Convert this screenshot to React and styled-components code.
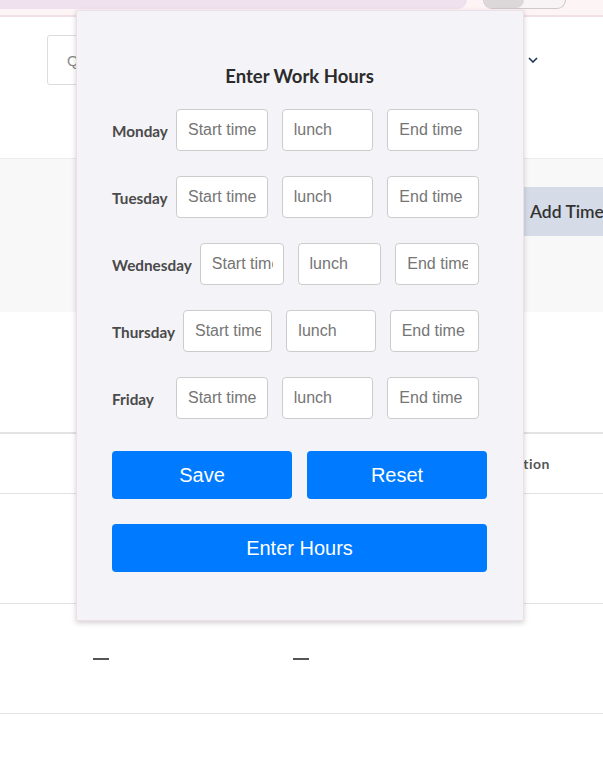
import React from "react";
import styled, { createGlobalStyle } from "styled-components";

const Global = createGlobalStyle`
  html, body { margin: 0; padding: 0; background: #ffffff; }
  body { font-family: Lato, "Liberation Sans", sans-serif; }
  * { box-sizing: border-box; }
`;

const Page = styled.div`
  position: relative;
  width: 603px;
  height: 760px;
  overflow: hidden;
  background: #fff;
`;

const TopBar = styled.div`
  display: flex;
  align-items: flex-start;
  height: 17px;
  background: #fdf4f6;
  border-bottom: 2px solid #f1e0e6;
`;

const TopPill = styled.div`
  width: 467px;
  height: 9px;
  background: #efe2ee;
  border-bottom-right-radius: 12px;
`;

const Toggle = styled.div`
  margin-left: 16px;
  width: 83px;
  height: 9px;
  border: 1px solid #cfc9cc;
  border-top: none;
  border-radius: 0 0 20px 20px;
  background: #f8f4f5;
  display: flex;
`;

const Knob = styled.div`
  width: 40px;
  height: 8px;
  background: #dcd7d8;
  border-radius: 0 0 20px 20px;
`;

const Toolbar = styled.div`
  height: 142px;
  display: flex;
  align-items: flex-start;
  padding: 18px 0 0 47px;
  border-bottom: 1px solid #ebebeb;
  box-shadow: 0 1px 2px rgba(0,0,0,0.05);
`;

const Search = styled.div`
  width: 300px;
  height: 50px;
  border: 1px solid #dcdcdc;
  border-radius: 3px;
  display: flex;
  align-items: center;
  padding-left: 19px;
  font-family: "Liberation Sans", sans-serif;
  font-size: 15px;
  color: #888;
`;

const Chevron = styled.svg`
  margin: 22px 0 0 181px;
`;

const Band = styled.div`
  height: 153px;
  background: #f8f8f9;
  display: flex;
  justify-content: flex-end;
  align-items: flex-start;
  padding-top: 28px;
`;

const AddTime = styled.div`
  width: 79px;
  height: 49px;
  background: #d5dce7;
  display: flex;
  align-items: center;
  padding-left: 6px;
  font-size: 17.5px;
  font-weight: 600;
  color: #333;
  white-space: nowrap;
  overflow: hidden;
`;

const Spacer = styled.div`
  height: 122px;
  border-bottom: 2px solid #e3e3e3;
`;

const Row = styled.div`
  height: ${(p) => p.$h}px;
  border-bottom: 1px solid #e3e3e3;
  display: flex;
  align-items: center;
  font-size: 14px;
  font-weight: 700;
  color: #555;
`;

const HeadCell = styled.div`
  margin-left: 506px;
  letter-spacing: 0.5px;
`;

const Dash = styled.div`
  width: 16px;
  height: 2px;
  background: #555;
  margin-left: ${(p) => p.$ml}px;
`;

const Modal = styled.div`
  position: absolute;
  left: 76px;
  top: 10px;
  width: 448px;
  background: #f4f3f8;
  border: 1px solid #ecdfe6;
  box-shadow: 0 2px 5px rgba(60, 40, 50, 0.22);
  padding: 55px 36px 48px 35px;
  display: flex;
  flex-direction: column;
`;

const Title = styled.h2`
  margin: 0 0 23px;
  text-align: center;
  font-family: Lato, sans-serif;
  font-size: 18.5px;
  line-height: 20px;
  font-weight: 700;
  color: #2b2b2b;
`;

const DayRow = styled.div`
  display: flex;
  align-items: center;
  gap: 14px;
  padding-right: 8px;
  margin-bottom: 25px;
`;

const DayLabel = styled.label`
  min-width: 56px;
  font-family: Lato, sans-serif;
  font-size: 15.3px;
  font-weight: 700;
  color: #4a4a4a;
  padding-top: 2px;
  margin-right: -6px;
  white-space: nowrap;
`;

const TimeInput = styled.input`
  flex: 1;
  min-width: 0;
  height: 42px;
  border: 1px solid #cccccc;
  border-radius: 4px;
  background: #fff;
  padding: 0 10px 0 11px;
  font-family: "Liberation Sans", Arial, sans-serif;
  font-size: 16px;
  color: #333;
  &::placeholder { color: #757575; }
`;

const ButtonRow = styled.div`
  display: flex;
  gap: 15px;
  margin-top: 7px;
  margin-bottom: 25px;
`;

const Button = styled.button`
  flex: ${(p) => (p.$wide ? "none" : "1")};
  height: 48px;
  border: none;
  border-radius: 4px;
  background: #007bff;
  color: #fff;
  font-family: "Liberation Sans", Arial, sans-serif;
  font-size: 20px;
  cursor: pointer;
`;

const days = ["Monday", "Tuesday", "Wednesday", "Thursday", "Friday"];

export default function App() {
  return (
    <Page>
      <Global />
      <TopBar>
        <TopPill />
        <Toggle>
          <Knob />
        </Toggle>
      </TopBar>
      <Toolbar>
        <Search>Quick search</Search>
        <Chevron width="10" height="6" viewBox="0 0 10 6">
          <path d="M1 1 L5 5 L9 1" fill="none" stroke="#1d3557" strokeWidth="1.6" />
        </Chevron>
      </Toolbar>
      <Band>
        <AddTime>Add Time</AddTime>
      </Band>
      <Spacer />
      <Row $h={60}>
        <HeadCell>Action</HeadCell>
      </Row>
      <Row $h={110} />
      <Row $h={110}>
        <Dash $ml={93} />
        <Dash $ml={184} />
      </Row>
      <Modal>
        <Title>Enter Work Hours</Title>
        {days.map((d) => (
          <DayRow key={d}>
            <DayLabel>{d}</DayLabel>
            <TimeInput placeholder="Start time" />
            <TimeInput placeholder="lunch" />
            <TimeInput placeholder="End time" />
          </DayRow>
        ))}
        <ButtonRow>
          <Button>Save</Button>
          <Button>Reset</Button>
        </ButtonRow>
        <Button $wide>Enter Hours</Button>
      </Modal>
    </Page>
  );
}
